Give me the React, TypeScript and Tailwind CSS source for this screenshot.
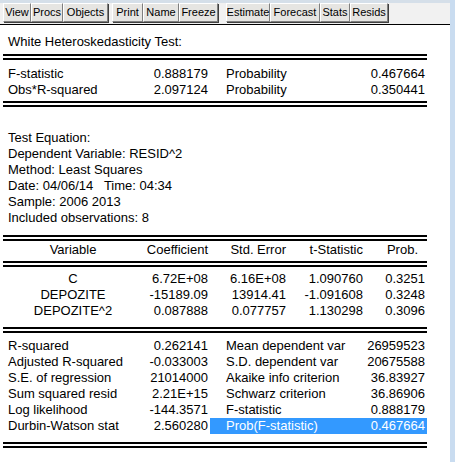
const font = { fontFamily: '"Liberation Sans", Arial, sans-serif' };

const buttons: { label: string; w: string; gap?: string }[] = [
  { label: 'View', w: 'w-[28px]' },
  { label: 'Procs', w: 'w-[32px]' },
  { label: 'Objects', w: 'w-[45px]', gap: 'mr-[4px]' },
  { label: 'Print', w: 'w-[31px]' },
  { label: 'Name', w: 'w-[36px]' },
  { label: 'Freeze', w: 'w-[39px]', gap: 'mr-[8px]' },
  { label: 'Estimate', w: 'w-[44px]' },
  { label: 'Forecast', w: 'w-[50px]' },
  { label: 'Stats', w: 'w-[30px]' },
  { label: 'Resids', w: 'w-[38px]' },
];

function DoubleRule({ className = '' }: { className?: string }) {
  return <div className={`h-[6px] border-y-2 border-black ${className}`} />;
}

function StatRow({
  label,
  value,
  label2,
  value2,
  selected = false,
}: {
  label: string;
  value: string;
  label2: string;
  value2: string;
  selected?: boolean;
}) {
  return (
    <div className="grid grid-cols-[140px_65px_2px_217px] h-[16px] leading-[16px]">
      <div className="pl-[5px] whitespace-nowrap">{label}</div>
      <div className="text-right whitespace-nowrap">{value}</div>
      <div />
      <div
        className={`flex justify-between pl-[16px] pr-[2px] whitespace-nowrap ${
          selected ? 'bg-[#3399ff] text-white' : ''
        }`}
      >
        <span>{label2}</span>
        <span>{value2}</span>
      </div>
    </div>
  );
}

const coefRows = [
  ['C', '6.72E+08', '6.16E+08', '1.090760', '0.3251'],
  ['DEPOZITE', '-15189.09', '13914.41', '-1.091608', '0.3248'],
  ['DEPOZITE^2', '0.087888', '0.077757', '1.130298', '0.3096'],
];

const coefCols = 'grid grid-cols-[140px_65px_78px_77px_62px] h-[16px] leading-[16px]';

export default function App() {
  return (
    <div className="w-[455px] h-[462px] flex bg-[#c9dcf0] overflow-hidden text-black" style={font}>
      <div className="w-[450px] h-full flex flex-col bg-white">
        {/* toolbar */}
        <div className="bg-[#f1f1f1] pl-[3px] pb-[2px] border-t-[3px] border-[#d5dfe9]">
          <div className="flex">
            {buttons.map((b) => (
              <div
                key={b.label}
                className={`${b.w} ${b.gap ?? ''} h-[19px] flex items-center justify-center text-[11px] leading-none bg-[#e6e5e2] border border-t-white border-l-white border-r-[#7f7f7f] border-b-[#7f7f7f] shadow-[1px_1px_0_#404040]`}
              >
                {b.label}
              </div>
            ))}
          </div>
        </div>
        <div className="h-[1px] bg-black" />

        <div className="pl-[3px] w-[427px] text-[13px]">
          <div className="pl-[5px] pt-[9px] h-[25px] leading-[16px]">White Heteroskedasticity Test:</div>
          <DoubleRule className="mt-[4px]" />
          <div className="pt-[6px] pb-[3px]">
            <StatRow label="F-statistic" value="0.888179" label2="Probability" value2="0.467664" />
            <StatRow label="Obs*R-squared" value="2.097124" label2="Probability" value2="0.350441" />
          </div>
          <DoubleRule />

          <div className="pl-[5px] pt-[23px] leading-[16px]">
            <div>Test Equation:</div>
            <div>Dependent Variable: RESID^2</div>
            <div>Method: Least Squares</div>
            <div>Date: 04/06/14&nbsp;&nbsp; Time: 04:34</div>
            <div>Sample: 2006 2013</div>
            <div>Included observations: 8</div>
          </div>

          <DoubleRule className="mt-[9px]" />
          <div className={`${coefCols} mt-[1px] mb-[3px]`}>
            <div className="text-center">Variable</div>
            <div className="text-right">Coefficient</div>
            <div className="text-right">Std. Error</div>
            <div className="text-right">t-Statistic</div>
            <div className="text-right pr-[7px]">Prob.</div>
          </div>
          <DoubleRule />
          <div className="pt-[4px] pb-[8px]">
            {coefRows.map((r) => (
              <div key={r[0]} className={coefCols}>
                <div className="text-center">{r[0]}</div>
                <div className="text-right">{r[1]}</div>
                <div className="text-right">{r[2]}</div>
                <div className="text-right">{r[3]}</div>
                <div className="text-right">{r[4]}</div>
              </div>
            ))}
          </div>
          <DoubleRule />

          <div className="pt-[5px] pb-[8px]">
            <StatRow label="R-squared" value="0.262141" label2="Mean dependent var" value2="26959523" />
            <StatRow label="Adjusted R-squared" value="-0.033003" label2="S.D. dependent var" value2="20675588" />
            <StatRow label="S.E. of regression" value="21014000" label2="Akaike info criterion" value2="36.83927" />
            <StatRow label="Sum squared resid" value="2.21E+15" label2="Schwarz criterion" value2="36.86906" />
            <StatRow label="Log likelihood" value="-144.3571" label2="F-statistic" value2="0.888179" />
            <StatRow label="Durbin-Watson stat" value="2.560280" label2="Prob(F-statistic)" value2="0.467664" selected />
          </div>
          <DoubleRule />
        </div>
      </div>
    </div>
  );
}
